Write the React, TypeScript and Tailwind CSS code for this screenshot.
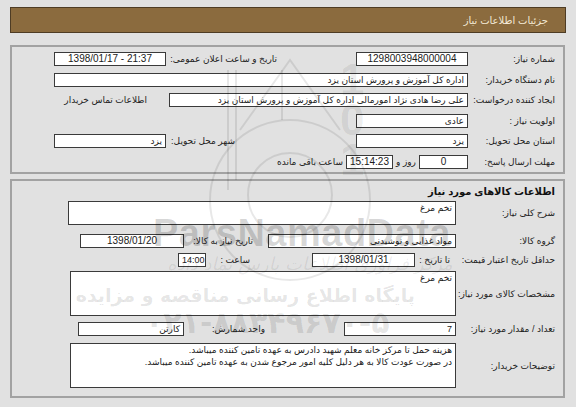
import React from "react";

const Box = ({
  className,
  num = false,
  small = false,
  children,
}: {
  className: string;
  num?: boolean;
  small?: boolean;
  children?: React.ReactNode;
}) => (
  <div
    dir={num ? "ltr" : "rtl"}
    className={`h-[14px] bg-white border border-[#3a3a3a] px-[3px] leading-[12px] text-[#1a1a1a] whitespace-nowrap overflow-hidden ${
      num && !small ? "text-[10px]" : "text-[9px]"
    } ${className}`}
  >
    {children}
  </div>
);

const Label = ({ className = "", children }: { className?: string; children: React.ReactNode }) => (
  <div className={`text-[9px] leading-[12px] text-[#222] whitespace-nowrap ${className}`}>{children}</div>
);

const Watermark = () => (
  <div className="absolute inset-0 pointer-events-none select-none" dir="ltr">
    <svg className="absolute left-0 top-0" width="576" height="407" viewBox="0 0 576 407">
      <g fill="none" stroke="#000" strokeOpacity="0.09" strokeWidth="2">
        <circle cx="290" cy="200" r="80" />
        <circle cx="290" cy="195" r="42" />
        <line x1="228" y1="70" x2="228" y2="190" />
        <line x1="236" y1="70" x2="236" y2="180" />
        <line x1="282" y1="70" x2="282" y2="120" />
        <path d="M240 130 L290 60 L340 130" />
      </g>
    </svg>
    <div className="absolute left-[340px] top-[60px] text-[44px] leading-[40px] font-bold text-black/[0.08] font-['Liberation_Sans',sans-serif]">
      1<br />0<br />1
    </div>
    <div className="absolute left-[153px] top-[205px] text-[38px] font-bold tracking-[0.5px] text-black/[0.16] font-['Liberation_Sans',sans-serif]">
      ParsNamadData
    </div>
    <div dir="rtl" className="absolute left-[160px] top-[250px] w-[300px] text-center whitespace-nowrap text-[18px] italic text-black/[0.07] font-['DejaVu_Sans',sans-serif]">
      مرکز فراوری اطلاعات پارس نماد داده
    </div>
    <div dir="rtl" className="absolute left-[145px] top-[281px] w-[270px] text-center whitespace-nowrap text-[19px] font-bold text-black/[0.11] font-['DejaVu_Sans',sans-serif]">
      پایگاه اطلاع رسانی مناقصه و مزایده
    </div>
    <div className="absolute left-[145px] top-[305px] w-[240px] text-center whitespace-nowrap text-[30px] leading-[36px] font-bold text-black/[0.11] font-['DejaVu_Sans',sans-serif]">
      ۰۲۱-۸۸۳۴۹۶۷۰-۵
    </div>
  </div>
);

export default function App() {
  return (
    <div
      dir="rtl"
      className="relative w-[576px] h-[407px] overflow-hidden bg-[#e1e1e1] font-['Liberation_Sans','DejaVu_Sans',sans-serif] pt-[7px]"
    >
      {/* header */}
      <div className="ml-[10px] mr-[10px] h-[26px] bg-[#8b6b3e] border border-[#4e3c24] flex items-center pr-[17px]">
        <span className="text-[10px] text-[#f3ead6]">جزئیات اطلاعات نیاز</span>
      </div>

      {/* first box */}
      <div className="ml-[10px] mr-[11px] mt-[12px] border-2 border-[#a2a2a2] pr-[8px] pt-[2px]">
        <div className="flex items-center h-[20.5px]">
          <Label className="w-[87px]">شماره نیاز:</Label>
          <Box num className="w-[112px] text-center">1298003948000004</Box>
          <div className="w-[79px]" />
          <Label className="w-[111px]">تاریخ و ساعت اعلان عمومی:</Label>
          <Box num className="w-[112px] text-center">1398/01/17 - 21:37</Box>
        </div>
        <div className="flex items-center h-[20.5px]">
          <Label className="w-[87px]">نام دستگاه خریدار:</Label>
          <Box className="w-[414px]">اداره کل آموزش و پرورش استان یزد</Box>
        </div>
        <div className="flex items-center h-[20.5px]">
          <Label className="w-[87px]">ایجاد کننده درخواست:</Label>
          <Box className="w-[299px]">علی رضا هادی نژاد امورمالی اداره کل آموزش و پرورش استان یزد</Box>
          <div className="w-[22px]" />
          <Label className="text-[#3a3aa6]">اطلاعات تماس خریدار</Label>
        </div>
        <div className="flex items-center h-[20.5px]">
          <Label className="w-[87px]">اولویت نیاز :</Label>
          <Box className="w-[112px]">عادی</Box>
        </div>
        <div className="flex items-center h-[20.5px]">
          <Label className="w-[87px]">استان محل تحویل:</Label>
          <Box className="w-[112px]">یزد</Box>
          <div className="w-[121px]" />
          <Label className="w-[69px]">شهر محل تحویل:</Label>
          <Box className="w-[112px]">یزد</Box>
        </div>
        <div className="flex items-center h-[20.5px]">
          <Label className="w-[87px]">مهلت ارسال پاسخ:</Label>
          <Box num className="w-[49px] text-center">0</Box>
          <Label className="w-[26px] text-center">روز و</Label>
          <Box num className="w-[47px] text-center px-0">15:14:23</Box>
          <div className="w-[3px]" />
          <Label>ساعت باقی مانده</Label>
        </div>
      </div>

      {/* second box */}
      <div className="ml-[10px] mr-[11px] mt-[5px] border-2 border-[#a2a2a2] pr-[8px] pt-[2px] pb-[8px]">
        <div className="h-[16px] flex items-center">
          <span className="text-[10px] font-bold text-[#111]">اطلاعات کالاهای مورد نیاز</span>
        </div>
        <div className="flex items-center mt-[2px]">
          <Label className="w-[99px]">شرح کلی نیاز:</Label>
          <Box className="w-[388px] h-[24px]">تخم مرغ</Box>
        </div>
        <div className="flex items-center h-[20px] mt-[6px]">
          <Label className="w-[99px]">گروه کالا:</Label>
          <Box className="w-[188px]">مواد غذایی و نوشیدنی</Box>
          <div className="w-[15px]" />
          <Label className="w-[69px]">تاریخ نیاز به کالا:</Label>
          <Box num className="w-[104px] text-center">1398/01/20</Box>
        </div>
        <div className="flex items-center h-[18px]">
          <Label className="w-[99px]">حداقل تاریخ اعتبار قیمت:</Label>
          <div className="w-[6px]" />
          <Label className="w-[31px]">تا تاریخ :</Label>
          <div className="w-[4px]" />
          <Box num className="w-[103px] text-center">1398/01/31</Box>
          <div className="w-[62px]" />
          <Label className="w-[30px]">ساعت :</Label>
          <div className="w-[14px]" />
          <Box num small className="w-[28px] text-center px-0">14:00</Box>
        </div>
        <div className="flex items-center mt-[2px]">
          <Label className="w-[99px]">مشخصات کالای مورد نیاز:</Label>
          <Box className="w-[386px] h-[45px]">تخم مرغ</Box>
        </div>
        <div className="flex items-center h-[16px] mt-[5px]">
          <Label className="w-[99px]">تعداد / مقدار مورد نیاز:</Label>
          <Box className="w-[112px]">7</Box>
          <div className="w-[79px]" />
          <Label className="w-[81px]">واحد شمارش:</Label>
          <Box className="w-[106px]">کارتن</Box>
        </div>
        <div className="flex items-center mt-[6px]">
          <Label className="w-[99px]">توضیحات خریدار:</Label>
          <Box className="w-[386px] h-[45px] whitespace-normal">
            هزینه حمل تا مرکز خانه معلم شهید دادرس به عهده تامین کننده میباشد.
            <br />
            در صورت عودت کالا به هر دلیل کلیه امور مرجوع شدن به عهده تامین کننده میباشد.
          </Box>
        </div>
      </div>

      <Watermark />
    </div>
  );
}
